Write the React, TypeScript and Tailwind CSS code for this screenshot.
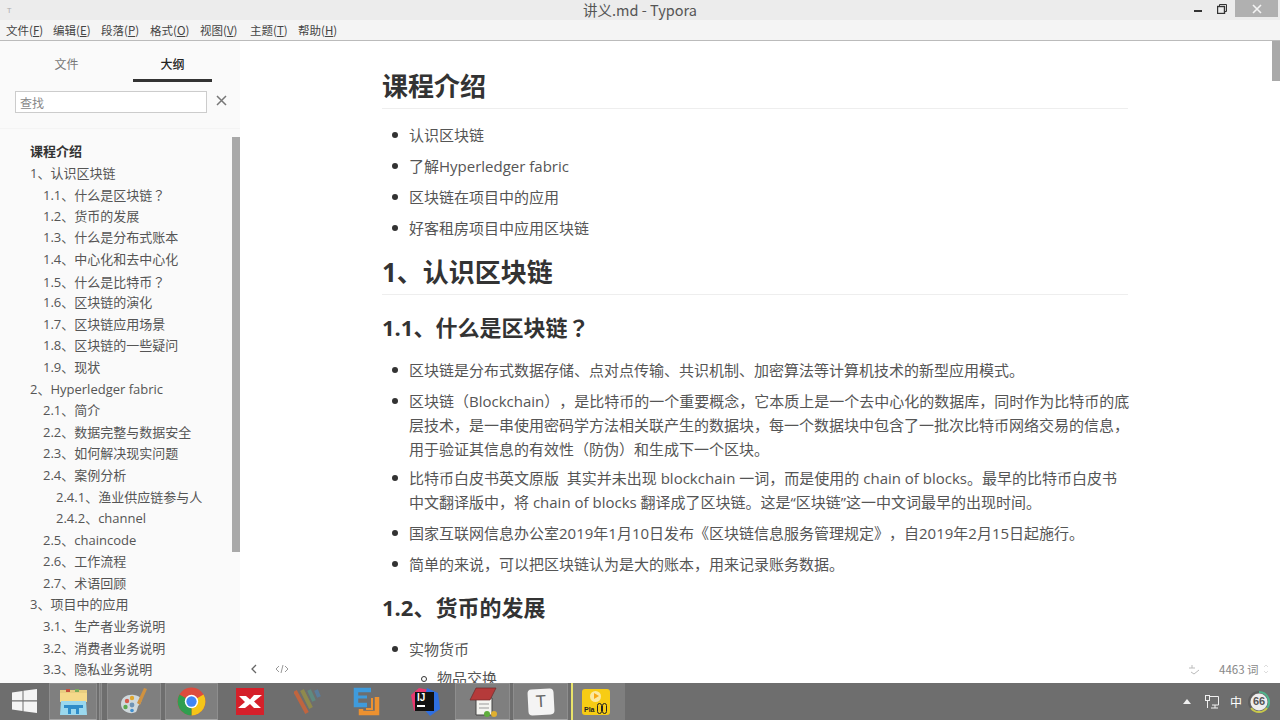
import React from "react";

const outline: [number, string, boolean?][] = [
  [0, "课程介绍", true],
  [0, "1、认识区块链"],
  [1, "1.1、什么是区块链？"],
  [1, "1.2、货币的发展"],
  [1, "1.3、什么是分布式账本"],
  [1, "1.4、中心化和去中心化"],
  [1, "1.5、什么是比特币？"],
  [1, "1.6、区块链的演化"],
  [1, "1.7、区块链应用场景"],
  [1, "1.8、区块链的一些疑问"],
  [1, "1.9、现状"],
  [0, "2、Hyperledger fabric"],
  [1, "2.1、简介"],
  [1, "2.2、数据完整与数据安全"],
  [1, "2.3、如何解决现实问题"],
  [1, "2.4、案例分析"],
  [2, "2.4.1、渔业供应链参与人"],
  [2, "2.4.2、channel"],
  [1, "2.5、chaincode"],
  [1, "2.6、工作流程"],
  [1, "2.7、术语回顾"],
  [0, "3、项目中的应用"],
  [1, "3.1、生产者业务说明"],
  [1, "3.2、消费者业务说明"],
  [1, "3.3、隐私业务说明"],
];

const menus: [string, string, string][] = [
  ["文件", "F", "w-[47px]"],
  ["编辑", "E", "w-[48px]"],
  ["段落", "P", "w-[49px]"],
  ["格式", "O", "w-[50px]"],
  ["视图", "V", "w-[50px]"],
  ["主题", "T", "w-[48px]"],
  ["帮助", "H", "w-[48px]"],
];

function Q() {
  return <span className="font-['Noto_Sans_CJK_JP',sans-serif]">？</span>;
}

function Li({ children, tight }: { children: React.ReactNode; tight?: boolean }) {
  return (
    <li className={`flex leading-[24px] ${tight ? "mb-[5px]" : "mb-[7px]"}`}>
      <span className="w-[27px] shrink-0 flex justify-start pl-[10px] pt-[9px]">
        <span className="w-[6px] h-[6px] rounded-full bg-[#333]" />
      </span>
      <span className="flex-1">{children}</span>
    </li>
  );
}

function TaskCell({ active, children, w }: { active?: boolean; children: React.ReactNode; w: string }) {
  return (
    <div className={`${w} h-[37px] shrink-0 flex items-center justify-center ${active ? "bg-[#7f7f7f] border border-[#8e8e8e] border-b-[#a5a5a5]" : ""}`}>
      {children}
    </div>
  );
}

export default function App() {
  return (
    <div className="w-[1280px] h-[720px] overflow-hidden flex flex-col bg-white text-[#333] [text-spacing-trim:space-all] font-['Open_Sans','Noto_Sans_CJK_SC',sans-serif]">
      {/* title bar */}
      <div className="h-[20px] shrink-0 bg-[#ececec] relative flex items-center justify-center text-[14.5px] text-[#555]">
        <span className="font-['Noto_Sans_CJK_SC','Open_Sans',sans-serif] leading-[20px]">讲义.md - Typora</span>
        <span className="absolute left-[7px] top-[5px] w-[10px] h-[10px] text-[8px] leading-[10px] text-[#aaa]">T</span>
        <div className="absolute right-0 top-0 h-[17px] flex items-center">
          <span className="w-[8px] h-[2px] bg-[#333] mt-[4px] mr-[15px]" />
          <svg width="10" height="10" viewBox="0 0 10 10" className="mr-[8px]" fill="none" stroke="#333">
            <rect x="0.5" y="2.5" width="7" height="7" strokeWidth="1.4" />
            <path d="M2.5 2V0.5H9.5V7.5H8" />
          </svg>
          <span className="w-[43px] h-[17px] bg-[#b0b0b0] flex items-center justify-center mr-[2px]">
            <svg width="10" height="10" viewBox="0 0 10 10" stroke="#f4f4f4" strokeWidth="1.6"><path d="M1 1L9 9M9 1L1 9" /></svg>
          </span>
        </div>
      </div>
      {/* menu bar */}
      <div className="h-[21px] shrink-0 bg-[#f4f4f4] flex items-center pl-[6px] text-[11.5px] text-[#444] border-b border-[#bbb] font-['Noto_Sans_CJK_SC',sans-serif]">
        {menus.map(([a, b, w]) => (
          <span key={a} className={`whitespace-nowrap leading-[22px] ${w}`}>
            {a}(<span className="underline">{b}</span>)
          </span>
        ))}
      </div>
      {/* body */}
      <div className="flex-1 min-h-0 flex relative">
        <aside className="w-[240px] shrink-0 bg-[#fafafa] flex flex-col overflow-hidden relative">
          <div className="h-[41px] shrink-0 flex text-[12px] font-['Noto_Sans_CJK_SC',sans-serif] pt-[13px]">
            <div className="w-[133px] text-center text-[#777] leading-[20px]">文件</div>
            <div className="w-[79px] text-center text-[#222] font-medium leading-[20px] h-[28px] border-b-[3px] border-[#333]">大纲</div>
          </div>
          <div className="h-[47px] shrink-0 flex items-start pl-[15px] pt-[9px] border-b border-[#f4f4f4]">
            <div className="w-[192px] h-[22px] bg-white border border-[#ccc] text-[12px] leading-[21px] pl-[4px] text-[#888] font-['Noto_Sans_CJK_SC',sans-serif]">查找</div>
            <svg width="11" height="11" viewBox="0 0 11 11" className="ml-[9px] mt-[4px]" stroke="#777" strokeWidth="1.5"><path d="M1 1L10 10M10 1L1 10" /></svg>
          </div>
          <div className="flex-1 min-h-0 pl-[30px] pt-[12px] text-[13px] text-[#555]">
            {outline.map(([lvl, t, b]) => (
              <div
                key={t}
                className={`h-[21.6px] leading-[21.6px] whitespace-nowrap ${lvl === 1 ? "pl-[13px]" : lvl === 2 ? "pl-[26px]" : ""} ${b ? "font-bold text-[#333]" : ""}`}
              >
                {t.endsWith("？") ? <>{t.slice(0, -1)}<Q /></> : t}
              </div>
            ))}
          </div>
          <div className="absolute right-0 top-[96px] w-[8px] h-[415px] bg-[#a9a9a9]" />
        </aside>

        <main className="flex-1 min-w-0 overflow-hidden relative">
          <div className="w-[748px] ml-[142px] text-[15px] text-[#555]">
            <h1 className="text-[26px] font-bold text-[#333] leading-[36px] mt-[27px] pb-[4px] border-b border-[#eee] mr-[2px]">课程介绍</h1>
            <ul className="mt-[14px]">
              <Li>认识区块链</Li>
              <Li>了解Hyperledger fabric</Li>
              <Li>区块链在项目中的应用</Li>
              <Li>好客租房项目中应用区块链</Li>
            </ul>
            <h1 className="text-[26px] font-bold text-[#333] leading-[36px] mt-[14px] pb-[4px] border-b border-[#eee] mr-[2px]">1、认识区块链</h1>
            <h2 className="text-[22px] font-bold text-[#333] leading-[32px] mt-[15px]">1.1、什么是区块链<Q /></h2>
            <ul className="mt-[15px]">
              <Li>区块链是分布式数据存储、点对点传输、共识机制、加密算法等计算机技术的新型应用模式。</Li>
              <Li tight>区块链（Blockchain），是比特币的一个重要概念，它本质上是一个去中心化的数据库，同时作为比特币的底层技术，是一串使用密码学方法相关联产生的数据块，每一个数据块中包含了一批次比特币网络交易的信息，用于验证其信息的有效性（防伪）和生成下一个区块。</Li>
              <Li>比特币白皮书英文原版&nbsp; 其实并未出现 blockchain 一词，而是使用的 chain of blocks。最早的比特币白皮书中文翻译版中，将 chain of blocks 翻译成了区块链。这是“区块链”这一中文词最早的出现时间。</Li>
              <Li>国家互联网信息办公室2019年1月10日发布《区块链信息服务管理规定》，自2019年2月15日起施行。</Li>
              <Li>简单的来说，可以把区块链认为是大的账本，用来记录账务数据。</Li>
            </ul>
            <h2 className="text-[22px] font-bold text-[#333] leading-[32px] mt-[15px]">1.2、货币的发展</h2>
            <ul className="mt-[14px]">
              <Li>实物货币</Li>
            </ul>
            <div className="flex leading-[24px] pl-[27px] -mt-[2px]">
              <span className="w-[28px] shrink-0 flex pl-[12px] pt-[10px]"><span className="w-[6px] h-[6px] rounded-full border border-[#333]" /></span>
              物品交换
            </div>
          </div>
          {/* footer overlay */}
          <div className="absolute left-0 bottom-[2px] w-full h-[24px] flex items-center text-[#888]">
            <svg width="8" height="10" viewBox="0 0 8 10" className="ml-[10px]" fill="none" stroke="#666" strokeWidth="1.3"><path d="M6 1L2 5L6 9" /></svg>
            <svg width="14" height="10" viewBox="0 0 14 10" className="ml-[17px]" fill="none" stroke="#999"><path d="M4 2L1 5L4 8M10 2L13 5L10 8M8 1L6 9" /></svg>
            <svg width="12" height="12" viewBox="0 0 12 12" className="absolute left-[948px] top-[6px]" fill="none" stroke="#bbb"><path d="M1 5H7M4 2V5M3 9L6 11L11 7" /></svg>
            <span className="absolute left-[979px] top-[3px] text-[11.5px] leading-[18px] text-[#888] font-['Noto_Sans_CJK_SC',sans-serif] whitespace-nowrap">4463 词</span>
            <svg width="6" height="10" viewBox="0 0 6 10" className="absolute left-[1023px] top-[7px]" fill="none" stroke="#ddd"><path d="M1 3L3 1L5 3M1 7L3 9L5 7" /></svg>
          </div>
          {/* main scrollbar */}
          <div className="absolute right-0 top-0 w-[8px] h-[40px] bg-[#a9a9a9]" />
        </main>
      </div>
      {/* taskbar */}
      <div className="h-[37px] shrink-0 bg-[#6e6e6e] flex relative">
        <div className="w-[49px] flex justify-center pt-[6px] pr-[1px] shrink-0">
          <svg width="25" height="24" viewBox="0 0 25 24" fill="#f4f4f4"><path d="M0 3.4L10.5 2V11.3H0ZM11.5 1.8L25 0V11.3H11.5ZM0 12.5H10.5V22L0 20.6ZM11.5 12.5H25V24L11.5 22.2Z" /></svg>
        </div>
        <TaskCell active w="w-[48px]">
          <svg width="29" height="29" viewBox="0 0 29 29">
            <path d="M1 3H12L14 5H28V15H1Z" fill="#f5d98a" />
            <path d="M1 3H28V6H1Z" fill="#e8cd80" />
            <rect x="7" y="2" width="4" height="3" fill="#c94f3a" />
            <rect x="16" y="2" width="4" height="3" fill="#7bae5a" />
            <path d="M2 14H27L28 28H1Z" fill="#9ad8ee" />
            <path d="M5 18H24V21H20V27H17V22H12V27H9V21H5Z" fill="#2f8dc9" />
          </svg>
        </TaskCell>
        <div className="w-[2px] shrink-0" />
        <div className="w-[3px] h-[37px] shrink-0 bg-[#7f7f7f] border-x border-[#8e8e8e]" />
        <div className="w-[5px] shrink-0" />
        <TaskCell active w="w-[54px]">
          <svg width="29" height="28" viewBox="0 0 29 28">
            <path d="M1 16C1 9 8 6 14 7C21 8 23 12 20 16C17 18 18 21 16 24C11 27 1 24 1 16Z" fill="#cfd8dc" />
            <circle cx="7" cy="13" r="2.2" fill="#d65a4a" />
            <circle cx="12" cy="10" r="2.2" fill="#e0a830" />
            <circle cx="5.5" cy="19" r="2.2" fill="#5aa84f" />
            <circle cx="12" cy="17" r="2.4" fill="#6f93b5" />
            <circle cx="12" cy="22.5" r="1.8" fill="#3f8fd0" />
            <path d="M27 1L20 17L17 15L24 0Z" fill="#d09240" />
          </svg>
        </TaskCell>
        <div className="w-[4px] shrink-0" />
        <TaskCell active w="w-[53px]">
          <svg width="29" height="29" viewBox="0 0 26 26">
            <circle cx="13" cy="13" r="12.5" fill="#dd4b3e" />
            <path d="M13 13L23.8 6.8A12.5 12.5 0 0 1 13 25.5Z" fill="#f5c518" />
            <path d="M13 13L13 25.5A12.5 12.5 0 0 1 2.2 6.8Z" fill="#2f9e4f" />
            <circle cx="13" cy="13" r="6" fill="#fff" />
            <circle cx="13" cy="13" r="4.6" fill="#4285f4" />
          </svg>
        </TaskCell>
        <TaskCell w="w-[64px]">
          <svg width="28" height="27" viewBox="0 0 28 27">
            <rect width="28" height="27" fill="#d5202a" />
            <path d="M3 8H10L14 11.5L18 7H26L18 13.5L25 20H18L14 16L9 20H2L9 14Z" fill="#fff" />
          </svg>
        </TaskCell>
        <TaskCell w="w-[52px]">
          <svg width="28" height="26" viewBox="0 0 28 26" strokeWidth="4" fill="none">
            <path d="M1 2L13 24" stroke="#c0653f" />
            <path d="M8 1L17 19" stroke="#8f8a4d" />
            <path d="M15 1L20 12" stroke="#5f8a80" />
            <path d="M22 1L25 8" stroke="#5a7d9c" />
          </svg>
        </TaskCell>
        <TaskCell w="w-[65px]">
          <svg width="27" height="29" viewBox="0 0 27 29" fill="none">
            <path d="M18 3H3V18H14" stroke="#3f9bdc" strokeWidth="4.5" />
            <path d="M3 10H14" stroke="#3f9bdc" strokeWidth="3" />
            <path d="M24 10V26H8V22" stroke="#ec9130" strokeWidth="4.5" />
            <path d="M13 22H19V11" stroke="#ec9130" strokeWidth="2" />
          </svg>
        </TaskCell>
        <TaskCell w="w-[52px]">
          <div className="w-[30px] h-[30px] relative">
            <svg width="30" height="30" viewBox="0 0 30 30" className="absolute inset-0">
              <path d="M1 8L9 1L19 3L14 14L4 24Z" fill="#e9386f" />
              <path d="M17 1L28 6L30 22L20 29L12 20Z" fill="#2f6fe0" />
            </svg>
            <div className="absolute left-[5px] top-[5px] w-[19px] h-[19px] bg-[#111] flex flex-col pl-[2px] text-white text-[10px] font-bold leading-[12px] font-['Liberation_Sans',sans-serif]">
              IJ
              <span className="w-[8px] h-[2px] bg-white mt-[1px]" />
            </div>
          </div>
        </TaskCell>
        <div className="w-[4px] shrink-0" />
        <TaskCell active w="w-[55px]">
          <svg width="28" height="32" viewBox="0 0 28 32">
            <path d="M7 12H23V29H7Z" fill="#f4f4f0" stroke="#444" />
            <path d="M7 2H27L21 14H1Z" fill="#b53a3a" stroke="#6d2a2a" strokeWidth="0.7" />
            <path d="M10 18H20M10 22H20" stroke="#999" />
            <circle cx="18" cy="28" r="3" fill="#5fae3c" />
            <circle cx="25" cy="28" r="3" fill="#e0b030" />
          </svg>
        </TaskCell>
        <div className="w-[3px] shrink-0" />
        <TaskCell active w="w-[55px]">
          <div className="w-[26px] h-[26px] bg-[#f4f4f4] rounded-[4px] rotate-[-3deg] flex items-center justify-center text-[#666] text-[17px] font-['Liberation_Sans',sans-serif]">T</div>
        </TaskCell>
        <div className="w-[3px] shrink-0" />
        <div className="w-[54px] h-[37px] shrink-0 bg-[#7f7f7f] border-l-[2px] border-[#e8e36a] flex items-center pl-[9px]">
          <div className="w-[28px] h-[26px] bg-[#f7cc14] rounded-[3px] relative">
            <span className="absolute left-[8px] top-[2px] w-[11px] h-[11px] rounded-full bg-[#fbe9a0] flex items-center justify-center">
              <svg width="6" height="6" viewBox="0 0 6 6"><path d="M1 0L6 3L1 6Z" fill="#f7a814" /></svg>
            </span>
            <span className="absolute left-[2px] bottom-[1px] text-[7px] font-bold text-[#222] leading-[9px] font-['Liberation_Sans',sans-serif]">Pla</span>
            <span className="absolute left-[15px] bottom-[1px] w-[5px] h-[11px] rounded-full border border-[#222]" />
            <span className="absolute left-[20px] bottom-[1px] w-[5px] h-[11px] rounded-full border border-[#222]" />
          </div>
        </div>
        {/* tray */}
        <div className="absolute left-[1183px] top-0 h-[37px] flex items-center text-white">
          <svg width="8" height="5" viewBox="0 0 8 5" className="mr-[14px]"><path d="M0 5L4 0L8 5Z" fill="#f0f0f0" /></svg>
          <svg width="14" height="14" viewBox="0 0 14 14" className="mr-[11px]" fill="none" stroke="#f0f0f0"><rect x="0.5" y="0.5" width="4" height="5" /><path d="M5 1.5H13.5V10H7M10 10V13M6 13H13M2.5 6V13" /></svg>
          <span className="text-[12px] mr-[6px] font-['Noto_Sans_CJK_SC',sans-serif]">中</span>
          <div className="w-[22px] h-[22px] relative">
            <svg width="22" height="22" viewBox="0 0 22 22" className="absolute inset-0" fill="none" strokeWidth="2">
              <circle cx="11" cy="11" r="8.5" fill="#eee" stroke="none" />
              <path d="M11 1A10 10 0 0 1 19 17" stroke="#4fb58d" />
              <path d="M19 17A10 10 0 0 1 3 17" stroke="#c9c94a" />
              <path d="M3 17A10 10 0 0 1 11 1" stroke="#5e5e5e" />
            </svg>
            <span className="absolute inset-0 flex items-center justify-center text-[#555] text-[11px] font-bold font-['Liberation_Sans',sans-serif]">66</span>
          </div>
        </div>
      </div>
    </div>
  );
}
